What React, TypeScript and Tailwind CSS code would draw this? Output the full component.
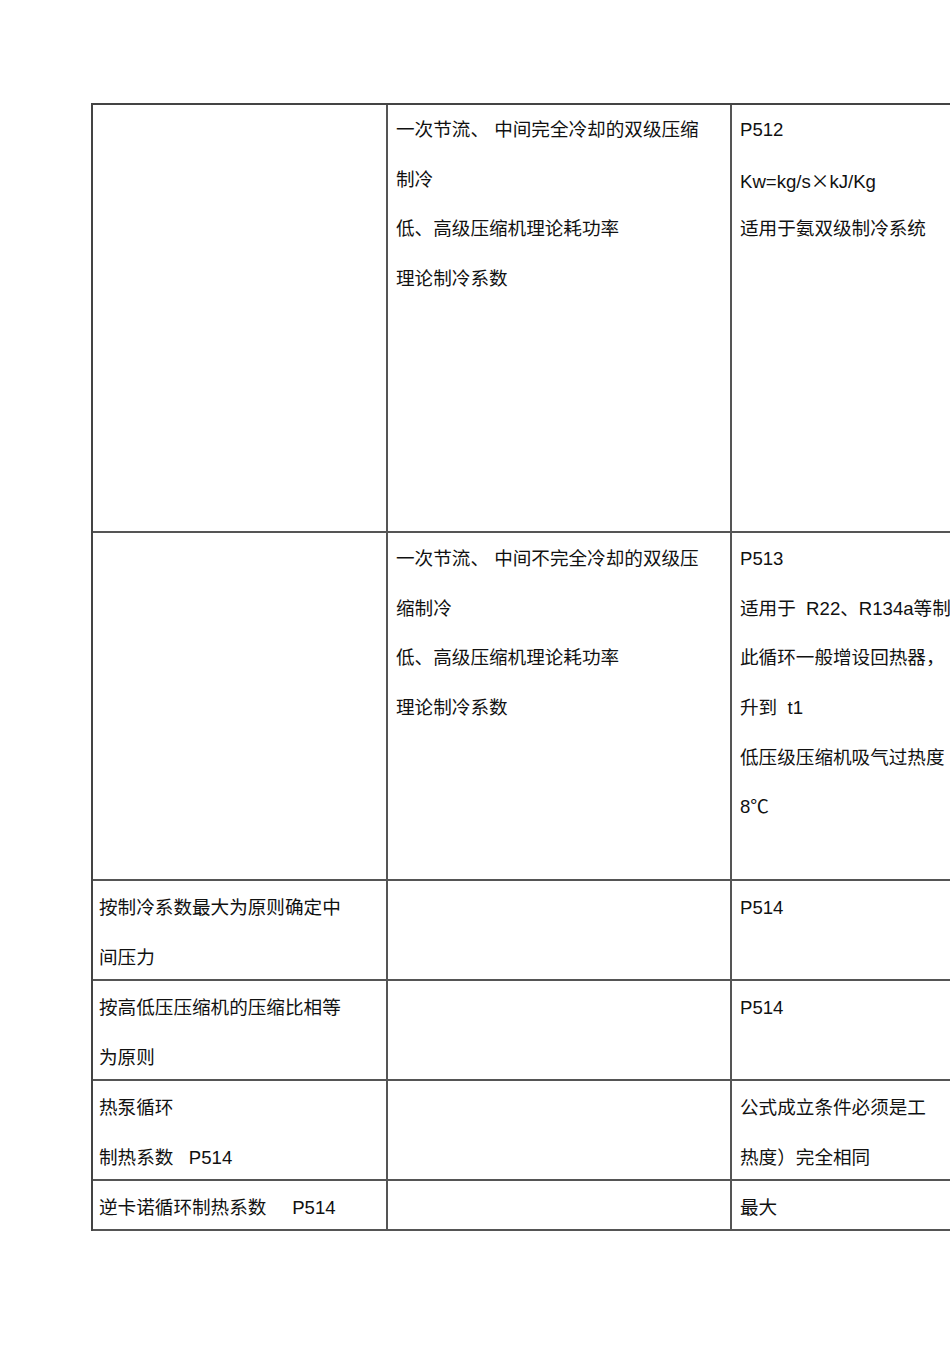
import React from 'react';

type Row = {
  height: string;
  pad: string;
  a: React.ReactNode[];
  b: React.ReactNode[];
  c: React.ReactNode[];
};

const cjk = { fontFamily: '"Noto Sans CJK SC", sans-serif' };

const rows: Row[] = [
  {
    height: 'h-[428px]',
    pad: 'pt-0',
    a: [],
    b: ['一次节流、 中间完全冷却的双级压缩', '制冷', '低、高级压缩机理论耗功率', '理论制冷系数'],
    c: [
      'P512',
      <>
        Kw=kg/s<span style={cjk}>×</span>kJ/Kg
      </>,
      '适用于氨双级制冷系统',
    ],
  },
  {
    height: 'h-[348px]',
    pad: 'pt-[1px]',
    a: [],
    b: ['一次节流、 中间不完全冷却的双级压', '缩制冷', '低、高级压缩机理论耗功率', '理论制冷系数'],
    c: ['P513', '适用于  R22、R134a等制', '此循环一般增设回热器，', '升到  t1', '低压级压缩机吸气过热度', '8℃'],
  },
  {
    height: 'h-[100px]',
    pad: 'pt-[2px]',
    a: ['按制冷系数最大为原则确定中', '间压力'],
    b: [],
    c: ['P514'],
  },
  {
    height: 'h-[100px]',
    pad: 'pt-[2px]',
    a: ['按高低压压缩机的压缩比相等', '为原则'],
    b: [],
    c: ['P514'],
  },
  {
    height: 'h-[100px]',
    pad: 'pt-[2px]',
    a: ['热泵循环', '制热系数   P514'],
    b: [],
    c: ['公式成立条件必须是工', '热度）完全相同'],
  },
  {
    height: 'h-[50px]',
    pad: 'pt-[2px]',
    a: ['逆卡诺循环制热系数     P514'],
    b: [],
    c: ['最大'],
  },
];

function Lines({ lines }: { lines: React.ReactNode[] }) {
  return (
    <>
      {lines.map((l, i) => (
        <div key={i} className="h-[49.7px] leading-[49.7px] whitespace-pre">
          {l}
        </div>
      ))}
    </>
  );
}

export default function App() {
  return (
    <div
      className="w-[950px] h-[1345px] overflow-hidden bg-white text-[#111] text-[18.6px]"
      style={{ fontFamily: '"Liberation Sans", "Noto Sans CJK SC", sans-serif' }}
    >
      <div className="pt-[103px] pl-[91px]">
        <div className="w-[1000px] border-t-2 border-l-2 border-[#444]">
          {rows.map((r, i) => (
            <div key={i} className={`flex ${r.height}`}>
              <div className={`w-[295px] shrink-0 border-r-2 border-b-2 border-[#555] pl-[6px] ${r.pad}`}>
                <Lines lines={r.a} />
              </div>
              <div className={`w-[344px] shrink-0 border-r-2 border-b-2 border-[#555] pl-[8px] ${r.pad}`}>
                <Lines lines={r.b} />
              </div>
              <div className={`w-[340px] shrink-0 border-r-2 border-b-2 border-[#555] pl-[8px] ${r.pad}`}>
                <Lines lines={r.c} />
              </div>
            </div>
          ))}
        </div>
      </div>
    </div>
  );
}
